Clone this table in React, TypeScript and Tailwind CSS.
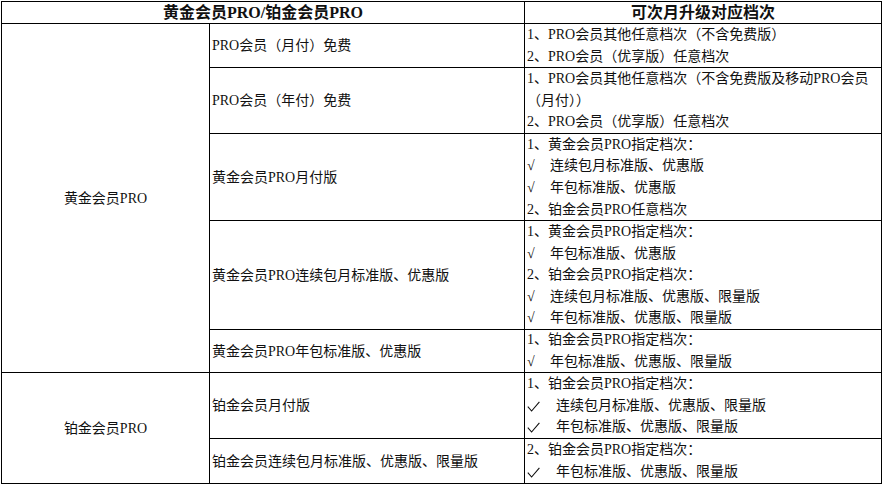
import React from 'react';

type Line = { check?: 'root' | 'tick'; text: string };

const rows: { label: string; lines: Line[] }[] = [
  {
    label: 'PRO会员（月付）免费',
    lines: [{ text: '1、PRO会员其他任意档次（不含免费版）' }, { text: '2、PRO会员（优享版）任意档次' }],
  },
  {
    label: 'PRO会员（年付）免费',
    lines: [
      { text: '1、PRO会员其他任意档次（不含免费版及移动PRO会员' },
      { text: '（月付））' },
      { text: '2、PRO会员（优享版）任意档次' },
    ],
  },
  {
    label: '黄金会员PRO月付版',
    lines: [
      { text: '1、黄金会员PRO指定档次：' },
      { check: 'root', text: '连续包月标准版、优惠版' },
      { check: 'root', text: '年包标准版、优惠版' },
      { text: '2、铂金会员PRO任意档次' },
    ],
  },
  {
    label: '黄金会员PRO连续包月标准版、优惠版',
    lines: [
      { text: '1、黄金会员PRO指定档次：' },
      { check: 'root', text: '年包标准版、优惠版' },
      { text: '2、铂金会员PRO指定档次：' },
      { check: 'root', text: '连续包月标准版、优惠版、限量版' },
      { check: 'root', text: '年包标准版、优惠版、限量版' },
    ],
  },
  {
    label: '黄金会员PRO年包标准版、优惠版',
    lines: [{ text: '1、铂金会员PRO指定档次：' }, { check: 'root', text: '年包标准版、优惠版、限量版' }],
  },
  {
    label: '铂金会员月付版',
    lines: [
      { text: '1、铂金会员PRO指定档次：' },
      { check: 'tick', text: '连续包月标准版、优惠版、限量版' },
      { check: 'tick', text: '年包标准版、优惠版、限量版' },
    ],
  },
  {
    label: '铂金会员连续包月标准版、优惠版、限量版',
    lines: [{ text: '2、铂金会员PRO指定档次：' }, { check: 'tick', text: '年包标准版、优惠版、限量版' }],
  },
];

function UpgradeLine({ line }: { line: Line }) {
  if (line.check === 'root') {
    return (
      <div className="flex">
        <span className="w-[23px] shrink-0">√</span>
        <span>{line.text}</span>
      </div>
    );
  }
  if (line.check === 'tick') {
    return (
      <div className="flex items-center">
        <span className="w-[29px] shrink-0 flex items-center">
          <svg width="13" height="11" viewBox="0 0 13 11" className="mt-[1px]">
            <path d="M0.8 5.6 L4.6 10 L12.4 0.8" fill="none" stroke="#111" strokeWidth="1.1" />
          </svg>
        </span>
        <span>{line.text}</span>
      </div>
    );
  }
  return <div className="whitespace-nowrap">{line.text}</div>;
}

export default function App() {
  return (
    <div className="min-h-screen bg-white">
      <div className="ml-px mt-px w-[881px] grid grid-cols-[207px_314px_356px] grid-rows-[21px_43px_65px_86px_108px_42px_65px_44px] gap-px p-px bg-black text-[14px] text-[#111] font-['Liberation_Serif','Noto_Sans_CJK_SC',serif]">
        <div className="col-span-2 bg-white flex items-center justify-center font-bold text-[16px]">
          黄金会员PRO/铂金会员PRO
        </div>
        <div className="bg-white flex items-center justify-center font-bold text-[16px]">可次月升级对应档次</div>

        <div className="row-start-2 row-span-5 col-start-1 bg-white flex items-center justify-center">黄金会员PRO</div>
        <div className="row-start-7 row-span-2 col-start-1 bg-white flex items-center justify-center">铂金会员PRO</div>

        {rows.map((row, i) => (
          <React.Fragment key={i}>
            <div className="col-start-2 bg-white flex items-center pl-[2px] whitespace-nowrap">{row.label}</div>
            <div className="col-start-3 bg-white flex flex-col justify-center pl-[2px] leading-[21.6px]">
              {row.lines.map((line, j) => (
                <UpgradeLine key={j} line={line} />
              ))}
            </div>
          </React.Fragment>
        ))}
      </div>
    </div>
  );
}
